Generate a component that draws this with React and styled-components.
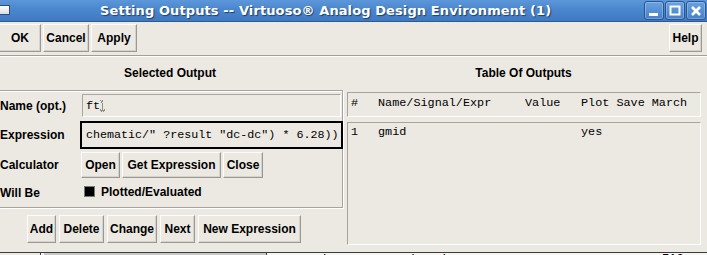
import React from 'react';
import styled, { createGlobalStyle } from 'styled-components';

const GlobalStyle = createGlobalStyle`
  html, body {
    margin: 0;
    padding: 0;
    background: #ece9e3;
  }
  body {
    font-family: "Liberation Sans", Arial, sans-serif;
    overflow: hidden;
  }
`;

const App = () => {
  return (
    <>
      <GlobalStyle />
      <Window>
        <TitleBar>
          <AppIcon />
          <Title>Setting Outputs -- Virtuoso® Analog Design Environment (1)</Title>
          <WinButtons>
            <WinButton aria-label="minimize">
              <svg width="12" height="12" viewBox="0 0 12 12">
                <rect x="1" y="8" width="9" height="3" fill="#fff" />
              </svg>
            </WinButton>
            <WinButton aria-label="maximize">
              <svg width="12" height="12" viewBox="0 0 12 12">
                <rect x="1.5" y="1.5" width="9" height="8" fill="none" stroke="#fff" strokeWidth="2" />
              </svg>
            </WinButton>
            <WinButton aria-label="close">
              <svg width="12" height="12" viewBox="0 0 12 12">
                <path d="M2 2 L10 10 M10 2 L2 10" stroke="#fff" strokeWidth="2.6" />
              </svg>
            </WinButton>
          </WinButtons>
        </TitleBar>

        <Toolbar>
          <Button w={42} h={28} edge>OK</Button>
          <Button w={46} h={28}>Cancel</Button>
          <Button w={46} h={28}>Apply</Button>
          <Spacer />
          <Button w={33} h={28}>Help</Button>
        </Toolbar>

        <Main>
          <LeftCol>
            <SectionTitle>Selected Output</SectionTitle>
            <Frame>
              <Row h={23} top={3}>
                <Label>Name (opt.)</Label>
                <NameField>
                  ft
                  <Cursor width="5" height="12" viewBox="0 0 5 12">
                    <path d="M0 0h1M2 1h1M1 2h1M2 4h1M2 6h1M2 8h1M0 10h1M2 10h1M4 10h1M1 11h1M3 11h1" stroke="#333" strokeWidth="1" />
                  </Cursor>
                </NameField>
              </Row>
              <Row h={28} top={4}>
                <Label>Expression</Label>
                <ExprField>chematic/" ?result "dc-dc") * 6.28))</ExprField>
              </Row>
              <Row h={26} top={3}>
                <Label>Calculator</Label>
                <ButtonGroup offset={1}>
                  <Button w={39} h={26}>Open</Button>
                  <Button w={99} h={26}>Get Expression</Button>
                  <Button w={40} h={26}>Close</Button>
                </ButtonGroup>
              </Row>
              <Row h={27} top={1}>
                <Label>Will Be</Label>
                <Check>
                  <Box />
                  Plotted/Evaluated
                </Check>
              </Row>
            </Frame>
            <Actions>
              <Button w={29} h={28}>Add</Button>
              <Button w={45} h={28}>Delete</Button>
              <Button w={50} h={28}>Change</Button>
              <Button w={35} h={28}>Next</Button>
              <Button w={103} h={28}>New Expression</Button>
            </Actions>
          </LeftCol>

          <RightCol>
            <SectionTitle>Table Of Outputs</SectionTitle>
            <TableHead>
              <Cell w={27}>#</Cell>
              <Cell w={147}>Name/Signal/Expr</Cell>
              <Cell w={56}>Value</Cell>
              <Cell>Plot Save March</Cell>
            </TableHead>
            <TableBody>
              <Cell w={27}>1</Cell>
              <Cell w={147}>gmid</Cell>
              <Cell w={56}></Cell>
              <Cell>yes</Cell>
            </TableBody>
          </RightCol>
        </Main>

        <Backdrop>
          <BackCell w={40} />
          <BackCell w={225} tone="#c9c9c9" />
          <BackText>
            <BackWord w={133}>compression</BackWord>
            <BackWord w={135}>qdc_gain</BackWord>
            <BackWord w={127}>m</BackWord>
            <BackWord>512</BackWord>
          </BackText>
        </Backdrop>
      </Window>
    </>
  );
};

const Window = styled.div`
  width: 707px;
  height: 255px;
  display: flex;
  flex-direction: column;
  overflow: hidden;
  background: #ece9e3;
`;

const TitleBar = styled.div`
  height: 21px;
  display: flex;
  align-items: center;
  background: linear-gradient(#5d97da, #4a86cd 45%, #3f79c2);
  border-bottom: 1px solid #2d5a92;
`;

const AppIcon = styled.div`
  width: 9px;
  height: 8px;
  margin-top: -1px;
  background: linear-gradient(#ffffff, #d9dde3);
  border: 1px solid #2c4f80;
  border-left: none;
`;

const Title = styled.div`
  flex: 1;
  padding-left: 90px;
  color: #fff;
  font-family: "DejaVu Sans", sans-serif;
  font-weight: bold;
  font-size: 13px;
  letter-spacing: 0.1px;
  text-shadow: 1px 1px 1px #1e3f6b;
  white-space: nowrap;
`;

const WinButtons = styled.div`
  display: flex;
  gap: 1px;
  padding-right: 1px;
`;

const WinButton = styled.div`
  width: 18px;
  height: 17px;
  display: flex;
  align-items: center;
  justify-content: center;
  border: 1px solid #2a5590;
  border-radius: 3px;
  background: linear-gradient(#6aa2e0, #4580c8);
  box-shadow: inset 0 0 0 1px rgba(255, 255, 255, 0.25);
`;

const Toolbar = styled.div`
  height: 31px;
  display: flex;
  align-items: flex-start;
  gap: 2px;
  padding-top: 2px;
  padding-right: 5px;
  border-bottom: 1px solid #a29f99;
  box-shadow: 0 1px 0 #ffffff;
  margin-bottom: 1px;
`;

const Spacer = styled.div`
  flex: 1;
`;

const Button = styled.div`
  box-sizing: border-box;
  width: ${(p) => p.w}px;
  height: ${(p) => p.h}px;
  flex: none;
  display: flex;
  align-items: center;
  justify-content: center;
  background: #ece9e3;
  border: 1px solid #9b9892;
  border-top-color: #fdfcfa;
  border-left-color: #fdfcfa;
  box-shadow: inset -1px -1px 0 #d6d3cd;
  margin-left: ${(p) => (p.edge ? '-1px' : '0')};
  color: #000;
  font-size: 12px;
  font-weight: bold;
  white-space: nowrap;
`;

const Main = styled.div`
  display: flex;
  height: 195px;
`;

const LeftCol = styled.div`
  width: 345px;
  display: flex;
  flex-direction: column;
`;

const RightCol = styled.div`
  flex: 1;
  display: flex;
  flex-direction: column;
  padding-left: 2px;
`;

const SectionTitle = styled.div`
  height: 33px;
  line-height: 33px;
  width: 353px;
  text-align: center;
  font-size: 12px;
  font-weight: bold;
  color: #000;
  ${LeftCol} & {
    width: 340px;
  }
`;

const Frame = styled.div`
  box-sizing: border-box;
  width: 345px;
  height: 118px;
  margin-left: -2px;
  border: 1px solid #a8a49d;
  box-shadow: inset 1px 1px 0 #fff, 1px 1px 0 #fff;
  display: flex;
  flex-direction: column;
`;

const Row = styled.div`
  height: ${(p) => p.h}px;
  margin-top: ${(p) => p.top}px;
  display: flex;
  align-items: center;
`;

const Label = styled.div`
  box-sizing: border-box;
  width: 81px;
  padding-left: 1px;
  flex: none;
  font-size: 12px;
  font-weight: bold;
  color: #000;
  white-space: nowrap;
`;

const NameField = styled.div`
  box-sizing: border-box;
  width: 259px;
  height: 23px;
  margin-left: 2px;
  padding-left: 3px;
  display: flex;
  align-items: center;
  border: 1px solid #fff;
  border-top-color: #aaa69f;
  border-left-color: #aaa69f;
  font-family: "Liberation Mono", monospace;
  font-size: 11.8px;
  color: #000;
`;

const Cursor = styled.svg`
  margin-left: 0;
  margin-top: 1px;
`;

const ExprField = styled.div`
  box-sizing: border-box;
  width: 263px;
  height: 28px;
  flex: none;
  padding-left: 4px;
  display: flex;
  align-items: center;
  border: 2px solid #000;
  font-family: "Liberation Mono", monospace;
  font-size: 11.7px;
  color: #000;
  white-space: nowrap;
  overflow: hidden;
`;

const ButtonGroup = styled.div`
  display: flex;
  gap: 2px;
  margin-left: ${(p) => p.offset}px;
`;

const Check = styled.div`
  display: flex;
  align-items: center;
  gap: 6px;
  margin-left: 4px;
  margin-top: -2px;
  font-size: 12px;
  font-weight: bold;
  color: #000;
`;

const Box = styled.span`
  width: 9px;
  height: 9px;
  background: #000;
  border: 1px solid #777;
`;

const Actions = styled.div`
  display: flex;
  gap: 3px;
  margin-top: 7px;
  padding-left: 27px;
`;

const TableHead = styled.div`
  box-sizing: border-box;
  width: 354px;
  height: 25px;
  margin-top: 2px;
  padding: 3px 0 0 3px;
  display: flex;
  border: 1px solid #fff;
  border-top-color: #a8a49d;
  border-left-color: #a8a49d;
  font-family: "Liberation Mono", monospace;
  font-size: 11.8px;
  color: #000;
`;

const TableBody = styled(TableHead)`
  height: 123px;
  margin-top: 5px;
  padding-top: 2px;
`;

const Cell = styled.span`
  width: ${(p) => (p.w ? `${p.w}px` : 'auto')};
  flex: none;
  white-space: nowrap;
`;

const Backdrop = styled.div`
  flex: 1;
  display: flex;
  border-top: 1px solid #3c3c3c;
  overflow: hidden;
`;

const BackCell = styled.div`
  width: ${(p) => p.w}px;
  background: ${(p) => p.tone || '#ece9e3'};
  border-right: 1px solid #444;
  box-shadow: inset 3px 0 0 ${(p) => (p.tone ? '#f4f4f4' : 'transparent')};
`;

const BackText = styled.div`
  flex: 1;
  display: flex;
  background: #f6f6f4;
  font-size: 13px;
  line-height: 13px;
  margin-top: -1px;
  color: #000;
`;

const BackWord = styled.span`
  width: ${(p) => (p.w ? `${p.w}px` : 'auto')};
  flex: none;
  white-space: nowrap;
`;

export default App;
